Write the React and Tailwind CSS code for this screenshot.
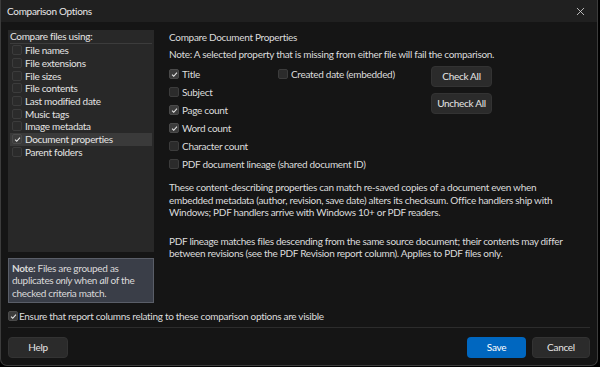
import { X } from 'lucide-react';

const FONT = { fontFamily: 'Lato, "Noto Sans", sans-serif' };

const LEFT = [
  ['File names', false],
  ['File extensions', false],
  ['File sizes', false],
  ['File contents', false],
  ['Last modified date', false],
  ['Music tags', false],
  ['Image metadata', false],
  ['Document properties', true],
  ['Parent folders', false],
];

const PROPS = [
  ['Title', true],
  ['Subject', false],
  ['Page count', true],
  ['Word count', true],
  ['Character count', false],
];

function Box({ checked }) {
  return (
    <span className={`w-[10px] h-[10px] rounded-[2px] border flex items-center justify-center shrink-0 ${checked ? 'bg-[#3c3c3c] border-[#4a4a4a]' : 'bg-[#2b2b2b] border-[#3c3c3c]'}`}>
      {checked && (
        <svg width="7" height="7" viewBox="0 0 8 8" fill="none">
          <path d="M1.2 4.2 L3.1 6 L6.8 1.8" stroke="#e8e8e8" strokeWidth="1.2" />
        </svg>
      )}
    </span>
  );
}

function Btn({ children, className = '' }) {
  return (
    <button className={`h-[21px] rounded-[4px] border border-[#333] bg-[#2b2b2b] text-[#e6e6e6] text-[10px] ${className}`}>{children}</button>
  );
}

export default function App() {
  return (
    <div className="w-[600px] h-[367px] bg-black tracking-[-0.3px]" style={FONT}>
      <div className="h-[366px] w-[598px] rounded-b-[7px] border border-[#3c3c3c] border-t-0 bg-[#151515] flex flex-col overflow-hidden text-[#dcdcdc]">
        <div className="h-[22px] bg-[#202020] flex items-center justify-between pl-[6px] pr-[10px] shrink-0">
          <span className="text-[10px] text-[#e8e8e8]">Comparison Options</span>
          <X size={13} strokeWidth={1.6} className="text-[#d0d0d0]" />
        </div>

        <div className="flex px-[7px] pt-[8px] h-[282px] shrink-0">
          <div className="w-[146px] shrink-0 flex flex-col">
            <div className="h-[222px] bg-[#282828] pt-[1px] px-[2px]">
              <div className="text-[10px] text-[#e4e4e4] leading-[11px] pb-[1px] border-b border-[#3c3c3c]">Compare files using:</div>
              <div>
                {LEFT.map(([l, c]) => (
                  <div key={l} className={`h-[12.7px] flex items-center gap-[3px] pl-[2px] ${c ? 'bg-[#3a3a3a]' : ''}`}>
                    <Box checked={c} />
                    <span className="text-[10px] leading-[12px] text-[#e4e4e4]">{l}</span>
                  </div>
                ))}
              </div>
            </div>
            <div className="mt-[6px] h-[45px] bg-[#3a3e48] border border-[#5a5e68] px-[3px] pt-[3px] text-[10px] leading-[12.3px] text-[#dadada]">
              <b className="font-bold">Note:</b> Files are grouped as duplicates <i>only</i> when <i>all</i> of the checked criteria match.
            </div>
          </div>

          <div className="ml-[15px] flex-1 pr-[8px] text-[10px]">
            <div className="leading-[13px] pt-[1px]">Compare Document Properties</div>
            <div className="leading-[13px] mt-[4px]">Note: A selected property that is missing from either file will fail the comparison.</div>
            <div className="flex mt-[4px]">
              <div className="w-[109px]">
                {PROPS.map(([l, c]) => (
                  <div key={l} className="h-[18px] flex items-center gap-[3px]">
                    <Box checked={c} />
                    <span>{l}</span>
                  </div>
                ))}
              </div>
              <div className="w-[153px]">
                <div className="h-[18px] flex items-center gap-[3px]">
                  <Box checked={false} />
                  <span>Created date (embedded)</span>
                </div>
              </div>
              <div className="flex flex-col gap-[6px] pt-[1px]">
                <Btn className="w-[61px]">Check All</Btn>
                <Btn className="w-[61px]">Uncheck All</Btn>
              </div>
            </div>
            <div className="h-[18px] flex items-center gap-[3px]">
              <Box checked={false} />
              <span>PDF document lineage (shared document ID)</span>
            </div>
            <p className="mt-[8px] leading-[12.5px]">These content-describing properties can match re-saved copies of a document even when embedded metadata (author, revision, save date) alters its checksum. Office handlers ship with Windows; PDF handlers arrive with Windows 10+ or PDF readers.</p>
            <p className="mt-[16px] leading-[12.5px]">PDF lineage matches files descending from the same source document; their contents may differ between revisions (see the PDF Revision report column). Applies to PDF files only.</p>
          </div>
        </div>

        <div className="px-[7px]">
          <div className="flex items-center gap-[1px] text-[10px] h-[14px] mt-[5px]">
            <Box checked={true} />
            <span>Ensure that report columns relating to these comparison options are visible</span>
          </div>
          <div className="mt-[4px] border-t border-[#2c2c2c]" />
          <div className="flex mt-[9px] gap-[6px]">
            <Btn className="w-[60px]">Help</Btn>
            <div className="flex-1" />
            <button className="w-[59px] h-[21px] rounded-[4px] bg-[#0067c0] text-white text-[10px]">Save</button>
            <Btn className="w-[58px]">Cancel</Btn>
          </div>
        </div>
      </div>
    </div>
  );
}
